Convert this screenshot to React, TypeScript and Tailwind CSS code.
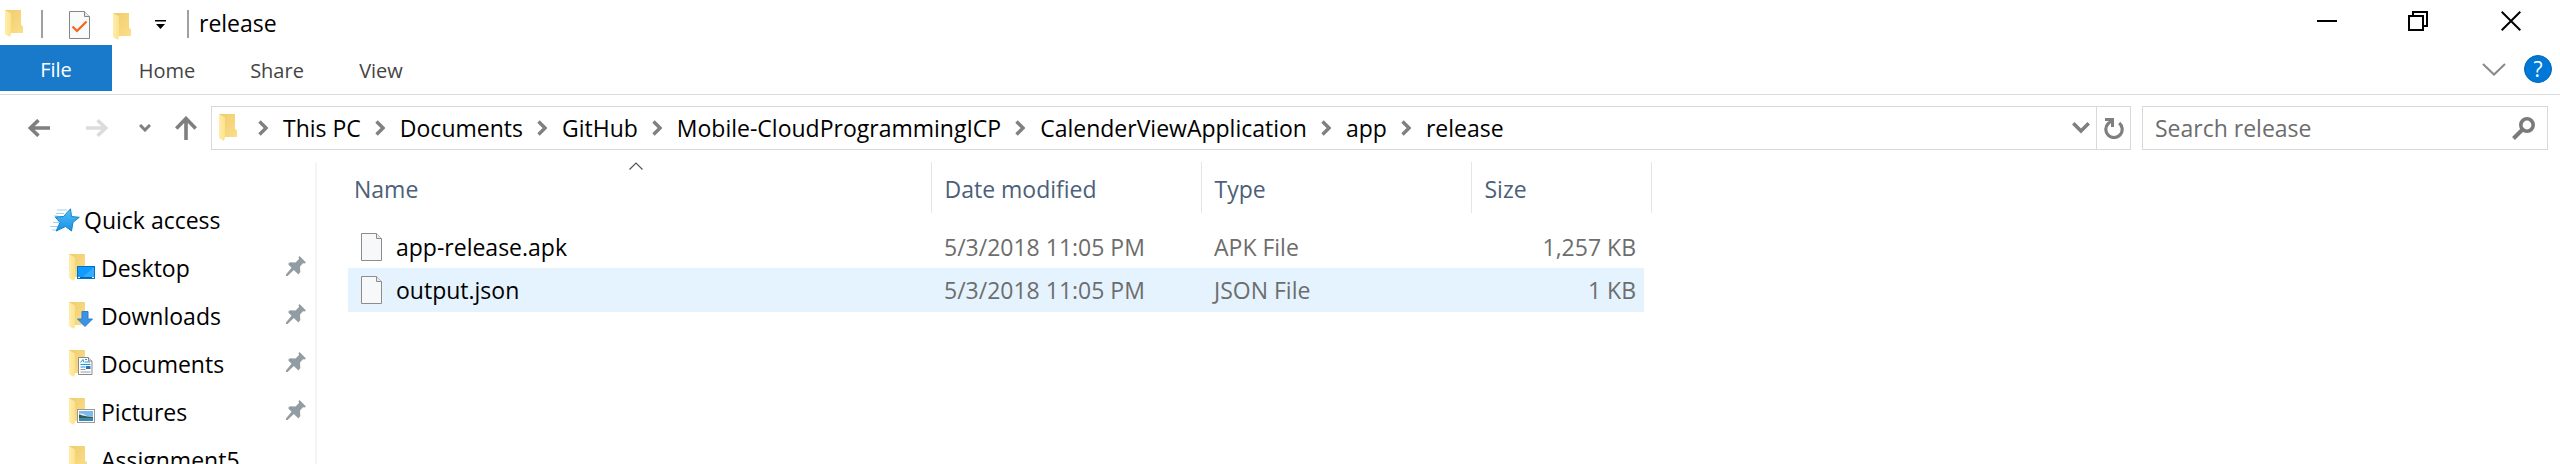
import type { ReactNode } from "react";

type FileRow = { name: string; modified: string; type: string; size: string; active: boolean };

const crumbs = [
  "This PC",
  "Documents",
  "GitHub",
  "Mobile-CloudProgrammingICP",
  "CalenderViewApplication",
  "app",
  "release",
];

const files: FileRow[] = [
  { name: "app-release.apk", modified: "5/3/2018 11:05 PM", type: "APK File", size: "1,257 KB", active: false },
  { name: "output.json", modified: "5/3/2018 11:05 PM", type: "JSON File", size: "1 KB", active: true },
];

function Folder({ children, notch = true }: { children?: ReactNode; notch?: boolean }) {
  return (
    <svg width="28" height="28" viewBox="0 0 28 28" className="shrink-0" aria-hidden="true">
      <defs>
        <linearGradient id="folder-back" x1="0" y1="0" x2="1" y2="1">
          <stop offset="0" stopColor="#f0cb6c" />
          <stop offset="1" stopColor="#fbdf8b" />
        </linearGradient>
        <linearGradient id="folder-front" x1="0" y1="0" x2="1" y2="0">
          <stop offset="0" stopColor="#ffedab" />
          <stop offset="1" stopColor="#fde28d" />
        </linearGradient>
      </defs>
      <path d={notch ? "M0 0h16v14.500l2 2V23H5L0 20z" : "M0 0h16v23H5L0 20z"} fill="url(#folder-back)" />
      <path d="M0 0l6 3.500v20L5 27l-5-3z" fill="url(#folder-front)" />
      {children}
    </svg>
  );
}

function DesktopBadge() {
  return (
    <g>
      <rect x="8.500" y="12.500" width="17" height="12" fill="#0f9bff" stroke="#0072c6" />
      <path d="M13 24L25 13v11z" fill="#34acff" />
      <path d="M9 23.500h16" stroke="#0b5ea8" />
      <path d="M9 23.500h2M23 23.500h2" stroke="#fff" />
    </g>
  );
}

function DownloadBadge() {
  return <path d="M13 9.500h6v7.500h4.500L16 24.500 8.500 17H13z" fill="#3b93e6" stroke="#2b7fd0" />;
}

function DocumentBadge() {
  return (
    <g>
      <path d="M9.500 7.500h10l3.500 3.500v13.500H9.500z" fill="#fff" stroke="#8b8b8b" />
      <path d="M19.500 7.500V11H23" fill="#e8e8e8" stroke="#8b8b8b" />
      <path d="M11.500 12.500l2.500-3 1 3M16 9.500h2M16 12h5M11.500 14.500h10M11.500 17h5" stroke="#1a9be0" fill="none" />
      <rect x="17" y="16" width="4.500" height="3" fill="#2a74b8" />
      <path d="M11.500 19.500h5M11.500 22h10" stroke="#9a9a9a" />
    </g>
  );
}

function PictureBadge() {
  return (
    <g>
      <rect x="8.500" y="11.500" width="17" height="13" fill="#fff" stroke="#9a9a9a" />
      <rect x="10" y="13" width="14" height="10" fill="#7fb8ea" />
      <path d="M10 16c3-1 5 0 7 1.500s5 1 7 1V20H10z" fill="#dceefa" />
      <path d="M10 16.500c3 .5 5 2 14 2.500v1.500H10z" fill="#2e5d52" />
      <rect x="10" y="20.500" width="14" height="2.500" fill="#3a86b8" />
    </g>
  );
}

function Pin() {
  return (
    <svg width="20" height="20" viewBox="0 0 20 20" className="mb-1 shrink-0" fill="#929da3" aria-hidden="true">
      <path d="M13.500 0L20 6.500l-1.500 1-1.500-.3-3 3.300.3 5.500-1.800 2.500L7.800 14 1.500 20H0v-1.500l5.500-6.800L2 8l2-1.800 5.500.3L13 3l-.5-1.800z" />
    </svg>
  );
}

function FileIcon({ checked = false }: { checked?: boolean }) {
  return checked ? (
    <svg width="21" height="28" viewBox="0 0 21 28" className="shrink-0" aria-hidden="true">
      <path d="M.5.500h15l5 5v22H.5z" fill="#f9fafb" stroke="#858585" />
      <path d="M15.500.500v5h5" fill="#e9e9e9" stroke="#858585" />
      <path d="M3.500 15.500l4.500 4.500L17.500 10.500" fill="none" stroke="#fa6216" strokeWidth="2.200" />
    </svg>
  ) : (
    <svg width="21" height="28" viewBox="0 0 21 28" className="shrink-0" aria-hidden="true">
      <path d="M.5.500h15l5 5v22H.5z" fill="#f7f8f9" stroke="#8c8c8c" />
      <path d="M15.500.500v5h5" fill="#e9e9e9" stroke="#8c8c8c" />
    </svg>
  );
}

function CrumbChevron() {
  return (
    <svg width="10" height="16" viewBox="0 0 10 16" className="mr-[15px] ml-[14px] shrink-0" aria-hidden="true">
      <path d="M1.500 1.500L8 8l-6.500 6.500" fill="none" stroke="#808080" strokeWidth="3.400" />
    </svg>
  );
}

const places: { name: string; badge?: ReactNode; pinned: boolean }[] = [
  { name: "Desktop", badge: <DesktopBadge />, pinned: true },
  { name: "Downloads", badge: <DownloadBadge />, pinned: true },
  { name: "Documents", badge: <DocumentBadge />, pinned: true },
  { name: "Pictures", badge: <PictureBadge />, pinned: true },
  { name: "Assignment5", pinned: false },
];

function TitleBar() {
  return (
    <header className="flex h-[45px] shrink-0 items-start justify-between">
      <div className="flex items-start pt-[10px] pl-[5px]">
        <Folder />
        <span className="ml-2 h-7 w-[2px] bg-[#a0a0a0]" />
        <button type="button" aria-label="Properties" className="mt-px ml-[26px]">
          <FileIcon checked />
        </button>
        <button type="button" aria-label="New folder" className="mt-[3px] ml-[23px]">
          <Folder />
        </button>
        <button type="button" aria-label="Customize Quick Access Toolbar" className="mt-[10px] ml-[14px]">
          <svg width="11" height="9" viewBox="0 0 11 9" aria-hidden="true" className="block">
            <path d="M0 0h11v1.500H0zM1 4h9L5.500 9z" />
          </svg>
        </button>
        <span className="ml-[21px] h-7 w-[2px] bg-[#a0a0a0]" />
        <h1 className="ml-[10px] text-[23px] leading-[26px]">release</h1>
      </div>
      <div className="flex pt-[11px] pr-[39px]">
        <button type="button" aria-label="Minimize">
          <svg width="20" height="20" viewBox="0 0 20 20" aria-hidden="true">
            <path d="M0 10h20" stroke="#000" strokeWidth="2" />
          </svg>
        </button>
        <button type="button" aria-label="Restore" className="ml-[71px]">
          <svg width="20" height="20" viewBox="0 0 20 20" fill="none" stroke="#000" strokeWidth="2" aria-hidden="true">
            <path d="M1 5h14v14H1zM5 5V1h14v14h-4" />
          </svg>
        </button>
        <button type="button" aria-label="Close" className="ml-[73px]">
          <svg width="20" height="20" viewBox="0 0 20 20" fill="none" stroke="#000" strokeWidth="2" aria-hidden="true">
            <path d="M.7.700l18.600 18.600M19.300.700L.7 19.300" />
          </svg>
        </button>
      </div>
    </header>
  );
}

function RibbonTabs() {
  return (
    <nav aria-label="Ribbon" className="flex h-[50px] shrink-0 items-start border-b border-[#dadbdc] text-[20px] leading-[52px] text-[#444444]">
      <button type="button" className="h-[46px] w-28 bg-[#1979ca] leading-[50px] text-white">File</button>
      <button type="button" className="w-[110px]">Home</button>
      <button type="button" className="w-[110px]">Share</button>
      <button type="button" className="w-[98px]">View</button>
      <button type="button" aria-label="Expand the Ribbon" className="mt-[18px] ml-auto">
        <svg width="24" height="13" viewBox="0 0 24 13" aria-hidden="true" className="block">
          <path d="M1 1l11 10.500L23 1" fill="none" stroke="#8a8a8a" strokeWidth="2" />
        </svg>
      </button>
      <button
        type="button"
        aria-label="Help"
        className="mt-[10px] mr-2 ml-[18px] h-7 w-7 rounded-full border border-[#0067b8] bg-[#0078d7] text-[21px] leading-6 text-white"
      >
        ?
      </button>
    </nav>
  );
}

function AddressRow() {
  return (
    <div className="flex h-[66px] shrink-0 items-start pt-[11px] pr-3">
      <div className="flex h-11 w-[211px] shrink-0 items-center pl-7">
        <button type="button" aria-label="Back">
          <svg width="22" height="18" viewBox="0 0 22 18" fill="none" stroke="#7f7f7f" strokeWidth="3.600" aria-hidden="true">
            <path d="M22 9H3M10.500 1.200L2.300 9l8.200 7.800" />
          </svg>
        </button>
        <button type="button" aria-label="Forward" className="ml-9">
          <svg width="22" height="18" viewBox="0 0 22 18" fill="none" stroke="#dcdcdc" strokeWidth="3.600" aria-hidden="true">
            <path d="M0 9h19M11.500 1.200L19.700 9l-8.200 7.800" />
          </svg>
        </button>
        <button type="button" aria-label="Recent locations" className="ml-[31px]">
          <svg width="12" height="8" viewBox="0 0 12 8" fill="none" stroke="#7f7f7f" strokeWidth="3" aria-hidden="true">
            <path d="M1 1l5 5 5-5" />
          </svg>
        </button>
        <button type="button" aria-label="Up" className="ml-6">
          <svg width="22" height="24" viewBox="0 0 22 24" fill="none" stroke="#7f7f7f" strokeWidth="3.600" aria-hidden="true">
            <path d="M11 24V3M1.300 12.500L11 2.500l9.700 10" />
          </svg>
        </button>
      </div>
      <div className="flex h-11 min-w-0 flex-1 items-center border border-[#d9d9d9]">
        <span className="ml-[7px] h-7 w-[25px]">
          <Folder />
        </span>
        <nav aria-label="Address" className="flex min-w-0 flex-1 items-center overflow-hidden whitespace-nowrap text-[23px] leading-[42px]">
          {crumbs.map((crumb) => (
            <span key={crumb} className="flex items-center">
              <CrumbChevron />
              <a href="#">{crumb}</a>
            </span>
          ))}
        </nav>
        <button type="button" aria-label="Previous locations" className="mr-[6px]">
          <svg width="18" height="12" viewBox="0 0 18 12" fill="none" stroke="#7f7f7f" strokeWidth="3.600" aria-hidden="true">
            <path d="M1.300 1.300L9 9l7.700-7.700" />
          </svg>
        </button>
        <button type="button" aria-label="Refresh" className="flex h-full w-[34px] items-center justify-center border-l border-[#d9d9d9]">
          <svg width="20" height="21" viewBox="0 0 20 21" aria-hidden="true">
            <path d="M4.600 5.200A8.200 8.200 0 1 0 15.200 5" fill="none" stroke="#7f7f7f" strokeWidth="3.200" />
            <path d="M1 0h9v9H7V5.200L4.500 7 2.600 5 5 3H1z" fill="#7f7f7f" />
          </svg>
        </button>
      </div>
      <div className="ml-[11px] flex h-11 w-[406px] shrink-0 items-center border border-[#d9d9d9] pr-3">
        <input
          type="text"
          aria-label="Search release"
          placeholder="Search release"
          className="min-w-0 flex-1 pl-3 text-[23px] leading-[42px] outline-none placeholder:text-[#6d6d6d]"
        />
        <button type="button" aria-label="Search">
          <svg width="23" height="23" viewBox="0 0 23 23" fill="none" stroke="#7a7a7a" aria-hidden="true">
            <circle cx="15" cy="8" r="6.200" strokeWidth="3.600" />
            <path d="M10.500 12.500L1.500 21.500" strokeWidth="4" />
          </svg>
        </button>
      </div>
    </div>
  );
}

function Sidebar() {
  return (
    <nav aria-label="Navigation pane" className="mt-px w-[317px] shrink-0 overflow-hidden border-r-2 border-[#f5f5f5] pt-[34px] text-[23px] leading-[48px]">
      <a href="#" className="flex h-12 items-center pl-[50px]">
        <svg width="30" height="24" viewBox="0 0 30 24" className="shrink-0" aria-hidden="true">
          <defs>
            <linearGradient id="star-fill" x1="0" y1="0" x2="0" y2="1">
              <stop offset="0" stopColor="#4fc3f7" />
              <stop offset="1" stopColor="#1a8fe8" />
            </linearGradient>
          </defs>
          <path d="M7 2h10M6 5.500h8M4 8h4M0 18.500h8M3 14.500h6M2 22h5" stroke="#9fd3f5" />
          <path d="M20.500.800L21.500 8.500l7.800.8-6.300 5 -1.500 8.700-6-4.500-9.300 4.500 3.800-8.500-4.800-5.500 8.300-.500z" fill="url(#star-fill)" stroke="#1681c9" />
        </svg>
        <span className="ml-1">Quick access</span>
      </a>
      <ul>
        {places.map((place) => (
          <li key={place.name}>
            <a href="#" className="flex h-12 items-center pr-[9px] pl-[69px]">
              <Folder notch={!place.badge}>{place.badge}</Folder>
              <span className="ml-1 flex-1">{place.name}</span>
              {place.pinned && <Pin />}
            </a>
          </li>
        ))}
      </ul>
    </nav>
  );
}

function FileTable() {
  return (
    <main className="mt-px min-w-0 flex-1 overflow-hidden pl-[31px]">
      <table className="w-[1303px] table-fixed text-left text-[23px] leading-[42px] text-[#6d6d6d]">
        <thead className="text-[#4c607a]">
          <tr className="h-[51px] leading-[47px]">
            <th scope="col" className="relative w-[583px] border-r border-[#e5e5e5] pt-1 pl-[6px] font-normal">
              Name
              <svg width="14" height="8" viewBox="0 0 14 8" className="absolute top-0 left-[281px]" aria-hidden="true">
                <path d="M.5 7.500L7 1l6.500 6.500" fill="none" stroke="#555" strokeWidth="1.200" />
              </svg>
            </th>
            <th scope="col" className="w-[270px] border-r border-[#e5e5e5] pt-1 pl-[13px] font-normal">Date modified</th>
            <th scope="col" className="w-[270px] border-r border-[#e5e5e5] pt-1 pl-[13px] font-normal">Type</th>
            <th scope="col" className="w-[173px] pt-1 pl-[13px] font-normal">Size</th>
            <td className="w-[7px] border-r border-[#e5e5e5]" />
          </tr>
        </thead>
        <tbody className="before:block before:h-[13px]">
          {files.map((file) => (
            <tr key={file.name} className={file.active ? "h-11 *:bg-[#e5f3ff]" : "h-[42px]"}>
              <td className="pl-[13px]">
                <span className="flex items-center gap-[14px] text-black">
                  <FileIcon />
                  {file.name}
                </span>
              </td>
              <td className="pl-[13px]">{file.modified}</td>
              <td className="pl-[13px]">{file.type}</td>
              <td className="pr-2 text-right">{file.size}</td>
              <td className="bg-white!" aria-hidden="true" />
            </tr>
          ))}
        </tbody>
      </table>
    </main>
  );
}

export default function App() {
  return (
    <div className="flex h-screen flex-col overflow-hidden bg-white font-['Open_Sans','Noto_Sans',sans-serif] text-black">
      <TitleBar />
      <RibbonTabs />
      <AddressRow />
      <div className="flex min-h-0 flex-1">
        <Sidebar />
        <FileTable />
      </div>
    </div>
  );
}
